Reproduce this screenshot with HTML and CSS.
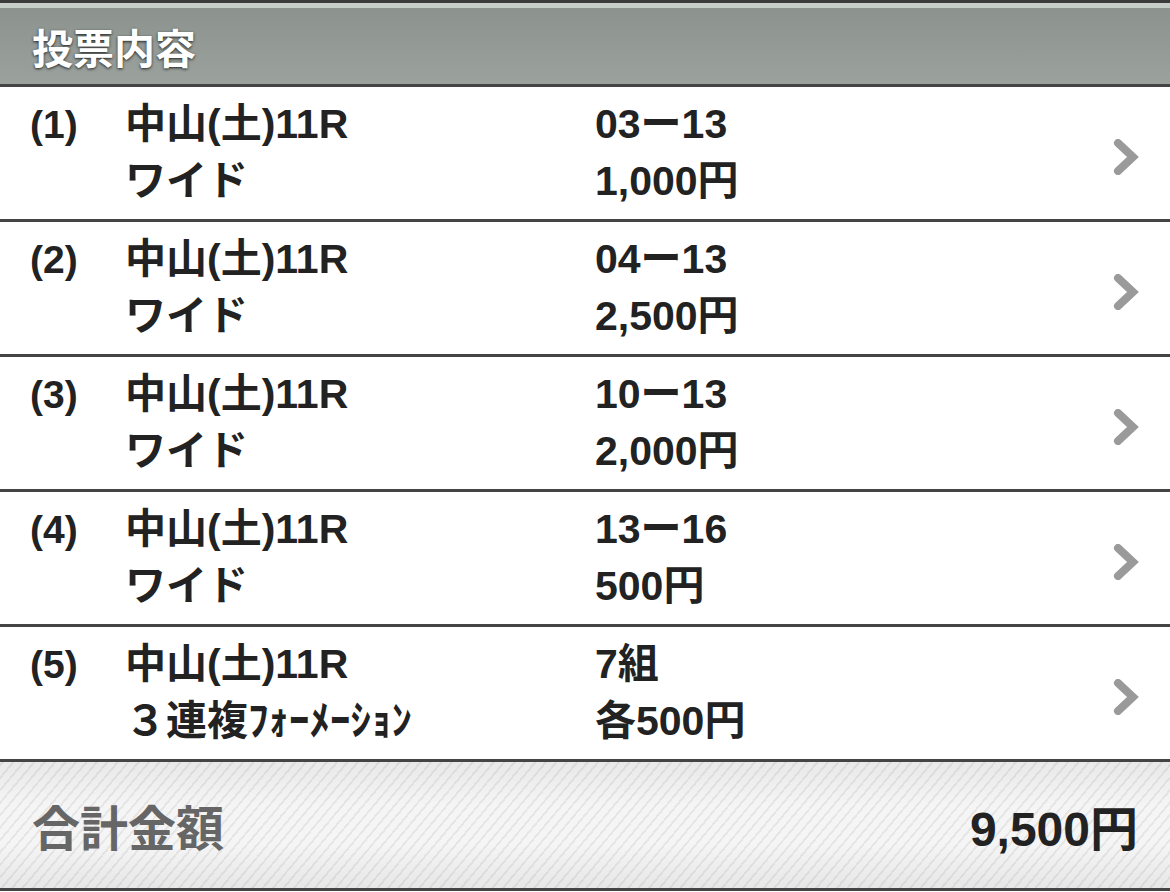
FILE: index.html
```html
<!DOCTYPE html>
<html lang="ja">
<head>
  <meta charset="UTF-8">
  <meta name="viewport" content="width=device-width, initial-scale=1">
  <title>投票内容</title>
  <link rel="stylesheet" href="styles.css">
</head>
<body>

<div class="bet-head">
  <h2>投票内容</h2>
</div>

<ul class="bet-list">
  <li class="bet">
    <span class="no">(1)</span>
    <div class="race">中山(土)11R<br>ワイド</div>
    <div class="pick">03ー13<br>1,000円</div>
    <svg class="arrow" viewBox="0 0 30 36"><polyline points="6,4 21,18 6,32"/></svg>
  </li>
  <li class="bet">
    <span class="no">(2)</span>
    <div class="race">中山(土)11R<br>ワイド</div>
    <div class="pick">04ー13<br>2,500円</div>
    <svg class="arrow" viewBox="0 0 30 36"><polyline points="6,4 21,18 6,32"/></svg>
  </li>
  <li class="bet">
    <span class="no">(3)</span>
    <div class="race">中山(土)11R<br>ワイド</div>
    <div class="pick">10ー13<br>2,000円</div>
    <svg class="arrow" viewBox="0 0 30 36"><polyline points="6,4 21,18 6,32"/></svg>
  </li>
  <li class="bet">
    <span class="no">(4)</span>
    <div class="race">中山(土)11R<br>ワイド</div>
    <div class="pick">13ー16<br>500円</div>
    <svg class="arrow" viewBox="0 0 30 36"><polyline points="6,4 21,18 6,32"/></svg>
  </li>
  <li class="bet">
    <span class="no">(5)</span>
    <div class="race">中山(土)11R<br>３連複ﾌｫｰﾒｰｼｮﾝ</div>
    <div class="pick">7組<br>各500円</div>
    <svg class="arrow" viewBox="0 0 30 36"><polyline points="6,4 21,18 6,32"/></svg>
  </li>
</ul>

<div class="total">
  <span class="total-label">合計金額</span>
  <span class="total-sum">9,500円</span>
</div>

</body>
</html>
```

FILE: styles.css
```css
body {
  margin: 0;
  padding: 0;
  background: #fff;
  color: #222;
  font-family: "Liberation Sans", "Noto Sans CJK JP", sans-serif;
  font-weight: bold;
}

/* 見出しバー */
.bet-head {
  border-top: 3px solid #3c3c3c;
  border-bottom: 3px solid #444;
  background: linear-gradient(to bottom, #c7cec9 0, #c7cec9 5px, #8c938f 5px, #9ba29d 100%);
  height: 76px;
  padding: 5px 0 0 32px;
  display: flex;
  align-items: center;
}
.bet-head h2 {
  margin: 0;
  color: #fff;
  font-family: "Noto Sans CJK JP", sans-serif;
  font-size: 41px;
  font-weight: bold;
  text-shadow: 0 1px 3px rgba(0,0,0,0.8);
}

/* 買い目一覧 */
.bet-list {
  list-style: none;
  margin: 0;
  padding: 0;
}
.bet {
  display: grid;
  grid-template-columns: 95px 470px 1fr 30px;
  align-items: center;
  height: 132px;
  padding: 0 28px 0 30px;
  border-bottom: 3px solid #444;
  font-size: 41px;
  line-height: 57px;
}
.bet:last-child {
  border-bottom: none;
}
.bet .no {
  align-self: start;
  margin-top: 9px;
  font-size: 39px;
}
.arrow {
  width: 30px;
  height: 36px;
  margin-top: 8px;
}
.arrow polyline {
  fill: none;
  stroke: #9a9a9a;
  stroke-width: 8;
  stroke-linecap: round;
  stroke-linejoin: miter;
}

/* 合計 */
.total {
  display: flex;
  justify-content: space-between;
  align-items: center;
  height: 126px;
  padding: 0 32px;
  border-top: 3px solid #444;
  border-bottom: 3px solid #444;
  background:
    linear-gradient(to bottom, rgba(0,0,0,0.05), rgba(255,255,255,0) 35%, rgba(255,255,255,0) 65%, rgba(0,0,0,0.06)),
    repeating-linear-gradient(-50deg, #f5f5f5 0, #f5f5f5 6px, #e6e6e6 6px, #e6e6e6 8px);
  font-size: 48px;
}
.total-label {
  color: #666;
  font-family: "Noto Sans CJK JP", sans-serif;
}
.total-sum {
  color: #222;
}
```
